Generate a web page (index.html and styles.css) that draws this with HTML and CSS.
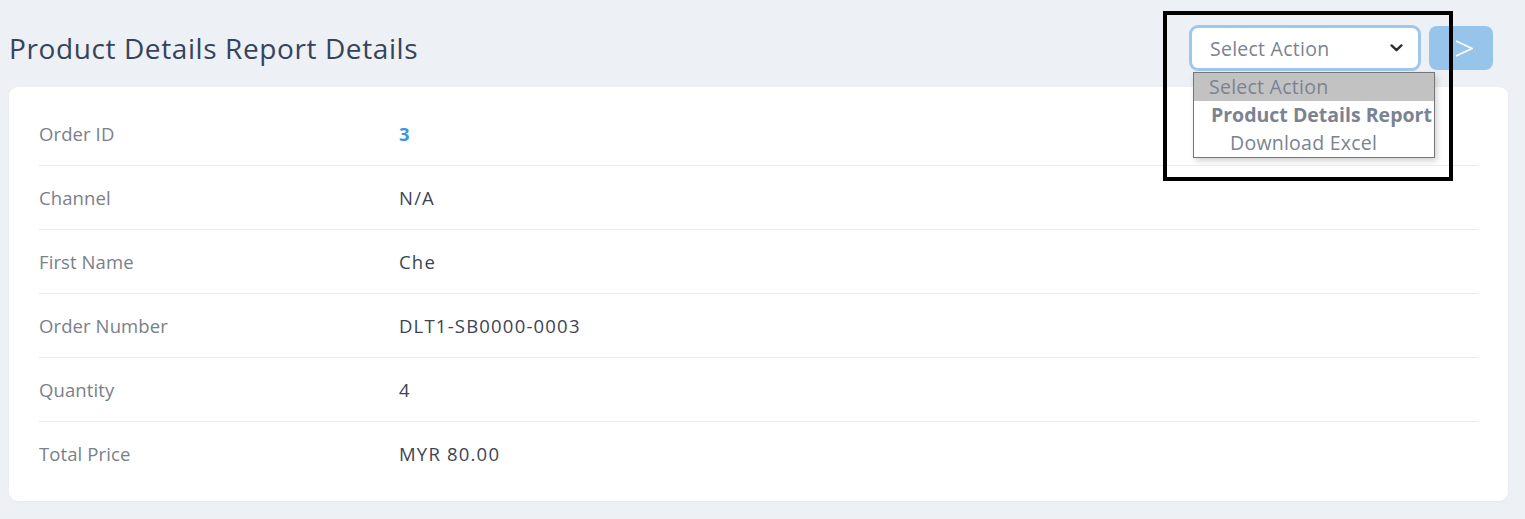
FILE: index.html
```html
<!DOCTYPE html>
<html>
<head>
<meta charset="utf-8">
<link rel="stylesheet" href="styles.css">
</head>
<body>
<div class="page">
  <header class="head">
    <h1 class="title">Product Details Report Details</h1>
    <div class="actions">
      <div class="select">
        <span class="select-text">Select Action</span>
        <svg class="chev" width="13" height="8" viewBox="0 0 13 8"><path d="M1.6 1.4 L6.5 6.2 L11.4 1.4" fill="none" stroke="#2b2f33" stroke-width="2.4" stroke-linecap="round" stroke-linejoin="round"/></svg>
      </div>
      <button class="go"><svg width="18" height="17" viewBox="0 0 18 17"><path d="M1 1 L17 8.5 L1 16" fill="none" stroke="#ffffff" stroke-width="1.8"/></svg></button>
      <div class="listbox">
        <div class="opt sel">Select Action</div>
        <div class="grp">Product Details Report</div>
        <div class="opt sub">Download Excel</div>
      </div>
      <div class="mark"></div>
    </div>
  </header>
  <section class="card">
    <div class="row"><span class="lbl">Order ID</span><span class="val link">3</span></div>
    <div class="row"><span class="lbl">Channel</span><span class="val">N/A</span></div>
    <div class="row"><span class="lbl">First Name</span><span class="val">Che</span></div>
    <div class="row"><span class="lbl">Order Number</span><span class="val">DLT1-SB0000-0003</span></div>
    <div class="row"><span class="lbl">Quantity</span><span class="val">4</span></div>
    <div class="row"><span class="lbl">Total Price</span><span class="val">MYR 80.00</span></div>
  </section>
</div>
</body>
</html>
```
FILE: styles.css
```css
html, body { margin: 0; padding: 0; }
body {
  background: #edf0f4;
  font-family: "Open Sans", "Noto Sans", sans-serif;
  width: 1525px;
  height: 519px;
  overflow: hidden;
}
.page { padding: 0 17px 0 9px; }
.head {
  display: flex;
  align-items: center;
  justify-content: space-between;
  height: 78px;
  padding-top: 9px;
}
.title {
  margin: 0;
  font-size: 28px;
  font-weight: 400;
  letter-spacing: 0.6px;
  color: #35445a;
}
.actions {
  position: relative;
  display: flex;
  align-items: center;
  gap: 8px;
  margin-right: 15px;
}
.select {
  height: 40px;
  border: 3px solid #9fc7ec;
  border-radius: 9px;
  background: #fff;
  display: flex;
  align-items: center;
  justify-content: space-between;
  width: 193px;
  padding: 0 15px 0 18px;
}
.select-text { font-size: 19.5px; letter-spacing: 0.25px; color: #7b8291; }
.go {
  width: 64px;
  height: 44px;
  border: none;
  border-radius: 8px;
  background: #96c4ea;
  display: flex;
  align-items: center;
  justify-content: center;
  padding: 0 0 0 6px;
}
.listbox {
  position: absolute;
  left: 4px;
  top: 47px;
  width: 240px;
  border: 1px solid #767676;
  background: #fff;
  box-shadow: 2px 3px 6px rgba(0,0,0,0.18);
  font-size: 19.5px;
  color: #7b8291;
}
.opt, .grp { height: 28px; line-height: 28px; padding-left: 15px; white-space: nowrap; }
.opt { letter-spacing: 0.25px; }
.sel { background: #c2c2c2; }
.grp { font-weight: 700; padding-left: 17px; }
.sub { padding-left: 36px; }
.mark {
  position: absolute;
  left: -26px;
  top: -14px;
  width: 282px;
  height: 162px;
  border: 4px solid #000;
  pointer-events: none;
}
.card {
  background: #fff;
  border-radius: 9px;
  padding: 15px 30px 16px;
  box-shadow: 0 1px 3px rgba(0,0,0,0.04);
}
.row {
  display: flex;
  align-items: center;
  height: 63px;
  border-bottom: 1px solid #e9ebee;
  font-size: 18.5px;
}
.row:last-child { border-bottom: none; }
.lbl { width: 360px; color: #7a808b; letter-spacing: 0.1px; }
.val { color: #3c4454; letter-spacing: 1.2px; }
.link { color: #3d97e0; font-weight: 700; letter-spacing: 0; }
```
